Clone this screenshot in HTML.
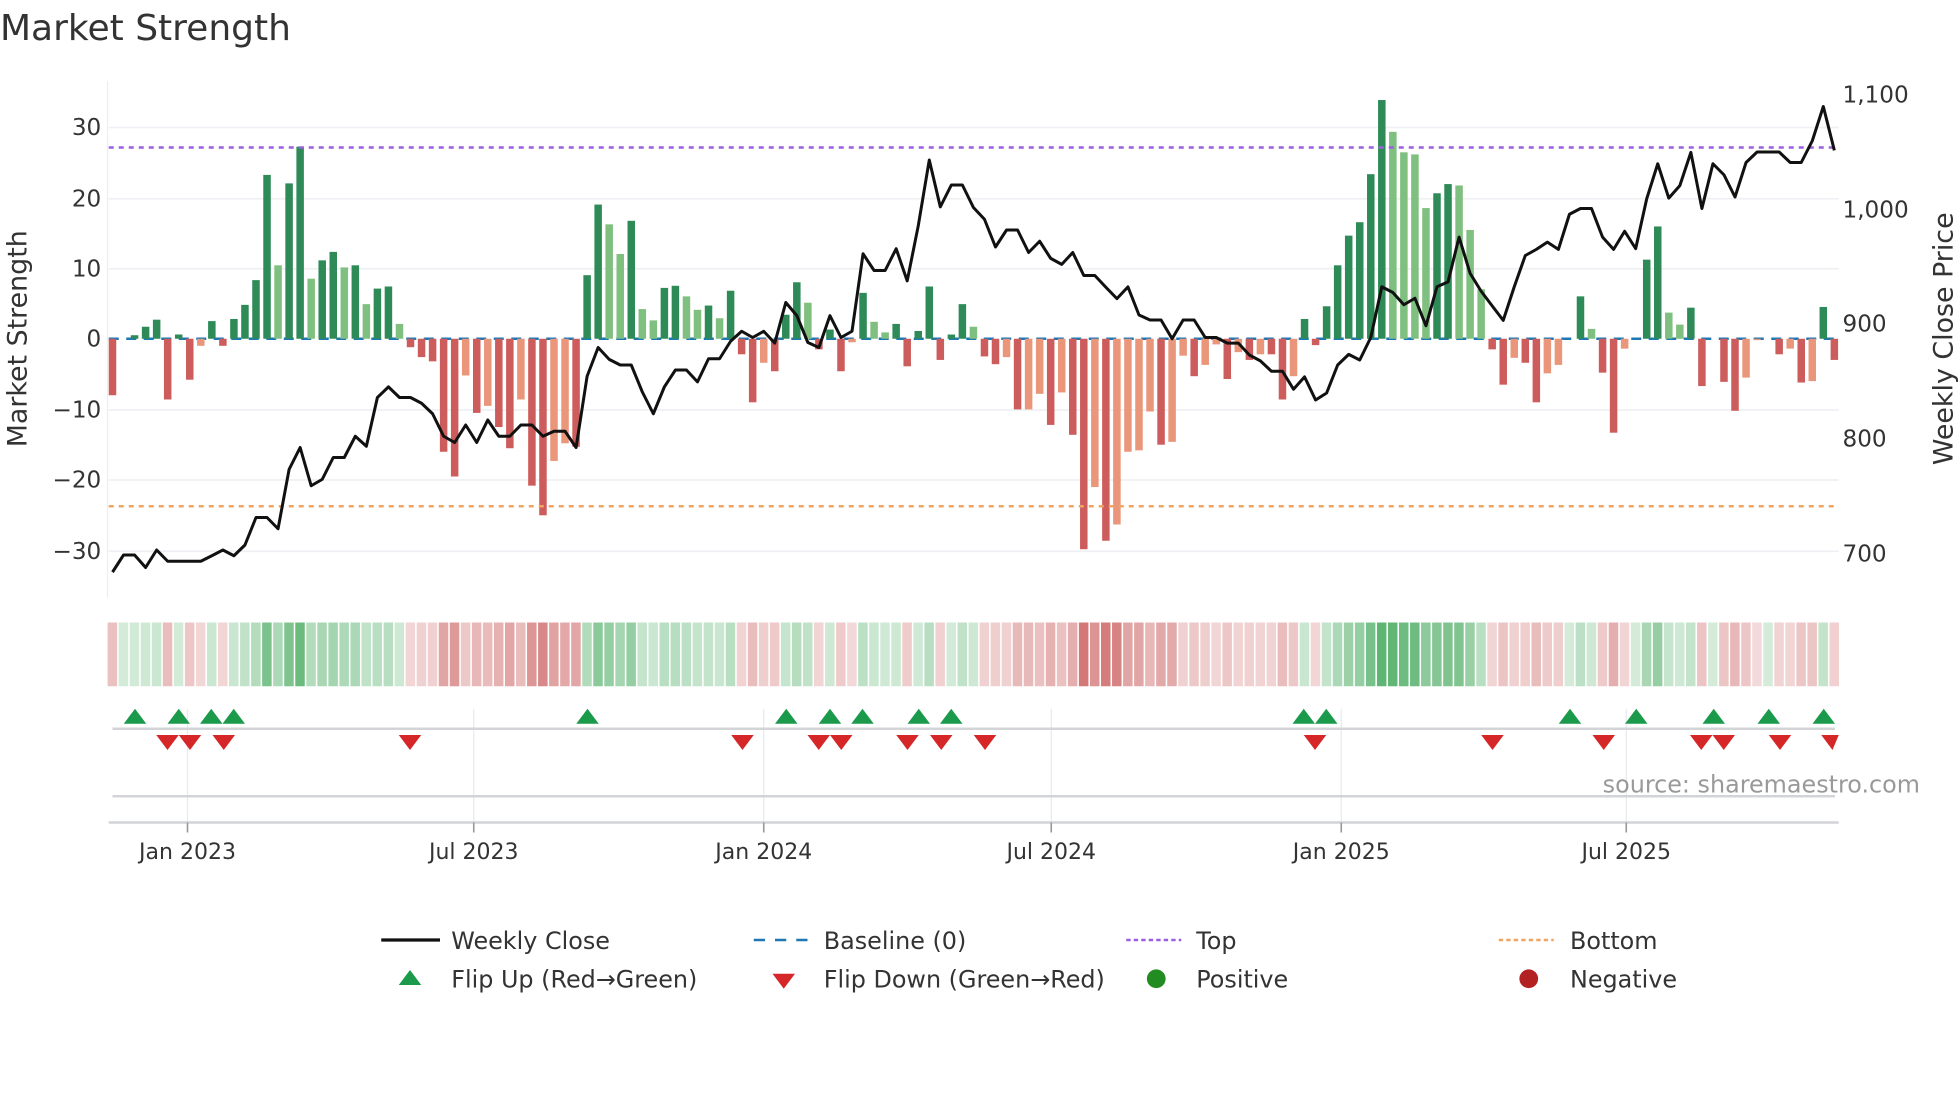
<!DOCTYPE html>
<html><head><meta charset="utf-8"><style>
html,body{margin:0;padding:0;background:#fff;width:1960px;height:1102px;overflow:hidden}
svg{display:block}
text{font-family:"DejaVu Sans","Liberation Sans",sans-serif;fill:#333}
</style></head><body>
<svg id="s" width="1960" height="1102" viewBox="0 0 1568 881.6" xmlns="http://www.w3.org/2000/svg">
<text x="0" y="32" font-size="28.8">Market Strength</text>
<g id="grid" stroke="#eef0f4" stroke-width="1.4">
<line x1="87" x2="1471" y1="102" y2="102"/><line x1="87" x2="1471" y1="159" y2="159"/>
<line x1="87" x2="1471" y1="215" y2="215"/><line x1="87" x2="1471" y1="328" y2="328"/>
<line x1="87" x2="1471" y1="384" y2="384"/><line x1="87" x2="1471" y1="441" y2="441"/>
</g>
<line x1="86" y1="65" x2="86" y2="478" stroke="#eceef2" stroke-width="1"/>
<g font-size="18.5" text-anchor="end">
<text x="81" y="108">30</text><text x="81" y="165">20</text><text x="81" y="221">10</text>
<text x="81" y="277">0</text><text x="81" y="334">−10</text><text x="81" y="390">−20</text><text x="81" y="447">−30</text>
</g>
<g font-size="18.5">
<text x="1474" y="82">1,100</text><text x="1474" y="174">1,000</text><text x="1474" y="265">900</text>
<text x="1474" y="357">800</text><text x="1474" y="449">700</text>
</g>
<text transform="translate(21,271) rotate(-90)" text-anchor="middle" font-size="21.5">Market Strength</text>
<text transform="translate(1562,271) rotate(-90)" text-anchor="middle" font-size="21.5">Weekly Close Price</text>
<line x1="87" x2="1471" y1="271" y2="271" stroke="#1f77b4" stroke-width="2" stroke-dasharray="8,6"/>
<g id="bars"></g>
<line x1="87" x2="1471" y1="118" y2="118" stroke="#9b5fe0" stroke-width="2" stroke-dasharray="4,4"/>
<line x1="87" x2="1471" y1="405" y2="405" stroke="#f0a662" stroke-width="2" stroke-dasharray="4,4"/>
<polyline id="price" fill="none" stroke="#111" stroke-width="2.4" stroke-linejoin="round"/>
<g id="heat"></g>
<g stroke="#e8eaee" stroke-width="1">
<line x1="150" x2="150" y1="567" y2="658"/><line x1="379" x2="379" y1="567" y2="658"/>
<line x1="611" x2="611" y1="567" y2="658"/><line x1="841" x2="841" y1="567" y2="658"/>
<line x1="1073" x2="1073" y1="567" y2="658"/><line x1="1301" x2="1301" y1="567" y2="658"/>
</g>
<line x1="90" x2="1468" y1="583" y2="583" stroke="#d2d4d8" stroke-width="2"/>
<line x1="90" x2="1468" y1="637" y2="637" stroke="#d2d4d8" stroke-width="2"/>
<line x1="87" x2="1471" y1="658" y2="658" stroke="#d2d4d8" stroke-width="2"/>
<g stroke="#999" stroke-width="1.3">
<line x1="150" x2="150" y1="658" y2="666"/><line x1="379" x2="379" y1="658" y2="666"/>
<line x1="611" x2="611" y1="658" y2="666"/><line x1="841" x2="841" y1="658" y2="666"/>
<line x1="1073" x2="1073" y1="658" y2="666"/><line x1="1301" x2="1301" y1="658" y2="666"/>
</g>
<g id="marks"></g>
<text x="1536" y="634" font-size="19.1" text-anchor="end" style="fill:#999">source: sharemaestro.com</text>
<g font-size="17.6" text-anchor="middle">
<text x="150" y="687">Jan 2023</text><text x="379" y="687">Jul 2023</text><text x="611" y="687">Jan 2024</text>
<text x="841" y="687">Jul 2024</text><text x="1073" y="687">Jan 2025</text><text x="1301" y="687">Jul 2025</text>
</g>
<g font-size="19.1">
<line x1="305" x2="352" y1="752" y2="752" stroke="#111" stroke-width="2.6"/>
<text x="361" y="759">Weekly Close</text>
<line x1="603" x2="646" y1="752" y2="752" stroke="#1f77b4" stroke-width="2" stroke-dasharray="9,8"/>
<text x="659" y="759">Baseline (0)</text>
<line x1="901" x2="945" y1="752" y2="752" stroke="#9b5fe0" stroke-width="2" stroke-dasharray="3.5,2.5"/>
<text x="957" y="759">Top</text>
<line x1="1199" x2="1243" y1="752" y2="752" stroke="#f0a662" stroke-width="2" stroke-dasharray="3.5,2.5"/>
<text x="1256" y="759">Bottom</text>
<polygon points="319,788 337,788 328,776" fill="#1a9a4a"/>
<text x="361" y="790">Flip Up (Red→Green)</text>
<polygon points="618,779 636,779 627,791" fill="#d62728"/>
<text x="659" y="790">Flip Down (Green→Red)</text>
<circle cx="925" cy="783" r="7.5" fill="#228b22"/>
<text x="957" y="790">Positive</text>
<circle cx="1223" cy="783" r="7.5" fill="#b22222"/>
<text x="1256" y="790">Negative</text>
</g>
</svg>
<script>
var v=[-8,0,0.5,1.7,2.7,-8.6,0.6,-5.8,-1,2.5,-1,2.8,4.8,8.3,23.2,10.4,22,27.2,8.5,11.1,12.3,10.1,10.4,4.9,7.1,7.4,2.1,-1.2,-2.6,-3.2,-16,-19.5,-5.2,-10.5,-9.5,-12.5,-15.5,-8.6,-20.8,-25,-17.3,-14.8,-15.3,9,19,16.2,12,16.7,4.2,2.6,7.2,7.5,6,4.1,
4.7,2.9,6.8,-2.2,-9,-3.4,-4.6,3.4,8,5.1,-1.5,1.3,-4.6,-0.5,6.5,2.4,0.9,2.1,-3.9,1.1,7.4,-3,0.6,4.9,1.7,-2.5,-3.6,-2.6,-10,-10,-7.8,-12.2,-7.6,-13.6,-29.8,-21,-28.6,-26.3,-16,-15.8,-10.3,-15,-14.6,-2.4,-5.3,-3.7,-0.8,-5.7,-1.9,-3,-2.2,-2.2,-8.6,-5.3,2.8,
-0.9,4.6,10.4,14.6,16.5,23.3,33.8,29.3,26.4,26.1,18.5,20.6,21.9,21.7,15.4,7,-1.5,-6.5,-2.7,-3.4,-9,-4.9,-3.7,0,6,1.4,-4.8,-13.3,-1.4,0,11.2,15.9,3.7,2,4.4,-6.7,0,-6.1,-10.2,-5.5,-0.2,0,-2.2,-1.4,-6.2,-6,4.5,-3];
var c="R-DDDRDRPDRDDDDLDDLDDLDLDDLRRRRRPRPRRPRRPPRDDLLDLLDDLL"+"DLDRRPRDDLRDRPDLLDRDDRDDLRRPRPPRPRRPRPPPPRPPRPPRPRPRRPD"+"RDDDDDDLLLLDDLLLRRPRRPP-DLRRP-DDLLDR-RRPP-RPRPDR";
var py=[457.7,444,444,454,440,449,449,449,449,444.6,440,444.6,436,414,414,423,375.5,358,388.6,383.5,366,366,349,357,318,309.5,318,318,322.6,331,349,354,340,354,336,349,349,340,340,349,345,345,358,301,278,287.5,292,292,313.5,331,309.5,296,296,305.5,
287,287,273,265,270,265,274.5,242,252.5,274,278,252.5,270,265,203,216.4,216.4,199,224.7,180.7,128,165.5,148,148,166,175.4,197.6,184,184,202,193,206.7,211.5,202,220.4,220.4,229.8,238.9,229.5,252,256,256,271,256,256,270,270,274.5,274.5,284,288.7,297,297,311.4,301.5,
320,314.4,292,283.5,288,270,229.4,234,243.8,238.6,260.6,229.4,225.5,189.7,218.7,233,244.7,256.3,229.4,204.4,199.5,193.7,199.5,171.4,166.8,166.8,189.7,199.5,185,198.9,159,131,158.5,148.5,121.9,166.8,131,139.9,157.6,130,121.6,121.6,121.6,130,130,112.7,85.2,120.3];
var col={D:"#2e8b57",L:"#7fbf7f",R:"#cd5c5c",P:"#e9967a"};
var NS="http://www.w3.org/2000/svg";
function el(t,a,p){var e=document.createElementNS(NS,t);for(var k in a)e.setAttribute(k,a[k]);document.getElementById(p).appendChild(e);return e;}
var pts=[];
for(var i=0;i<v.length;i++){
 var x=90+i*8.83, val=v[i], h=Math.abs(val)*5.65;
 if(c[i]!="-"&&h>0.3){el("rect",{x:(x-3).toFixed(2),y:(val>0?271-h:271).toFixed(2),width:6,height:h.toFixed(2),fill:col[c[i]]},"bars");}
 pts.push(x.toFixed(2)+","+py[i]);
 var a=Math.min(1,Math.abs(val)/30), f;
 if(val>=0){f="rgba(60,165,85,"+(0.22+0.6*a).toFixed(2)+")";}else{f="rgba(200,85,85,"+(0.22+0.58*a).toFixed(2)+")";}
 el("rect",{x:(x-3.9).toFixed(2),y:498,width:7.6,height:51,fill:f},"heat");
}
document.getElementById("price").setAttribute("points",pts.join(" "));
var up=[108,143,169,187,470,629,664,690,735,761,1043,1061,1256,1309,1371,1415,1459];
var dn=[134,152,179,328,594,655,673,726,753,788,1052,1194,1283,1361,1379,1424,1466];
up.forEach(function(x){el("polygon",{points:(x-9)+",579 "+(x+9)+",579 "+x+",567",fill:"#1a9a4a"},"marks");});
dn.forEach(function(x){var r=Math.min(x+9,1471);el("polygon",{points:(x-9)+",588 "+r+",588 "+x+",600",fill:"#d62728"},"marks");});
</script>
</body></html>
